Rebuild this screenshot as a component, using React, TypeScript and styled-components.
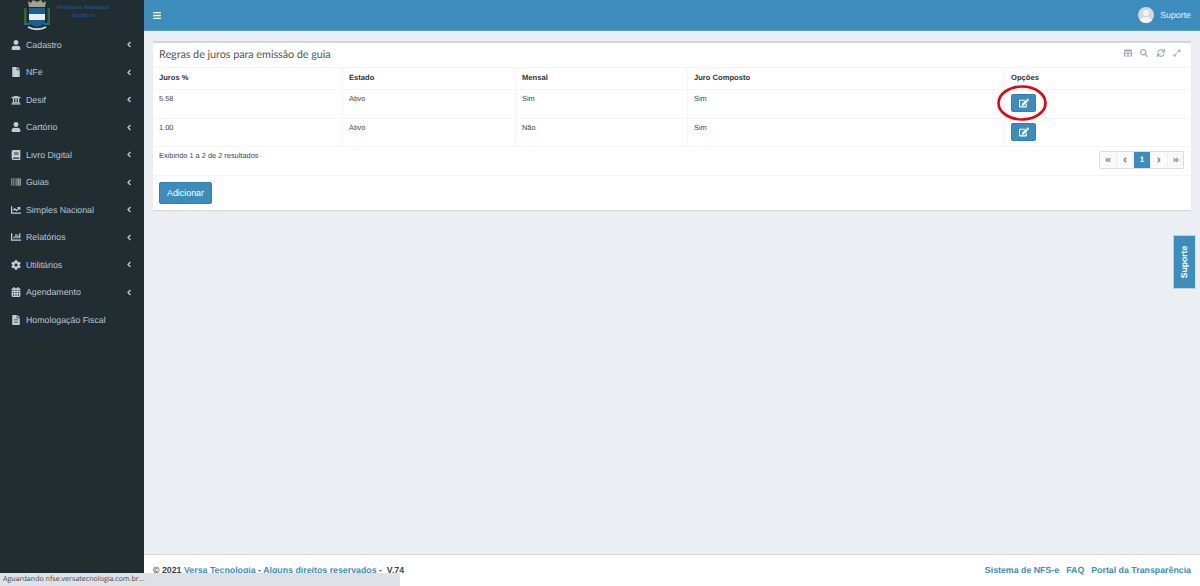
import React from 'react';
import styled, { createGlobalStyle } from 'styled-components';
import {
  FaUser, FaFile, FaUniversity, FaBook, FaChartLine, FaChartBar, FaCog, FaCalendarAlt, FaFileAlt,
  FaAngleLeft, FaAngleRight, FaAngleDoubleLeft, FaAngleDoubleRight, FaBars, FaTable, FaSearch, FaSync, FaExpandAlt, FaEdit, FaBarcode,
} from 'react-icons/fa';

const Global = createGlobalStyle`
  html, body { margin: 0; padding: 0; height: 100%; }
  body { font-family: "Liberation Sans", Arial, sans-serif; background: #ebeef3; overflow: hidden; text-rendering: geometricPrecision; }
  #root { height: 586px; }
  * { box-sizing: border-box; }
`;

const Page = styled.div`
  display: flex; width: 1200px; height: 586px; position: relative; overflow: hidden;
`;
const Sidebar = styled.aside`
  width: 144px; flex: none; background: #222d32; display: flex; flex-direction: column;
`;
const Logo = styled.div`
  height: 31px; display: flex; align-items: flex-start; padding-left: 24px; gap: 6px; overflow: hidden;
`;
const LogoText = styled.div`
  display: flex; flex-direction: column; align-items: center; width: 54px; padding-top: 5px;
  font-family: "Liberation Serif", serif; font-weight: 700; white-space: nowrap;
`;
const LogoLine = styled.span<{ $size: number; $mt?: number; $color?: string }>`
  font-size: ${p => p.$size}px; line-height: ${p => p.$size + 1}px; margin-top: ${p => p.$mt ?? 0}px; color: ${p => p.$color ?? '#17568a'};
`;
const Nav = styled.nav`
  display: flex; flex-direction: column;
`;
const NavItem = styled.a`
  height: 27.5px; display: flex; align-items: center; padding: 0 12px 0 11px;
  font-size: 8.8px; color: #b8c7ce;
  svg.lead { width: 10px; height: 10px; margin-right: 5px; flex: none; color: #c2ced4; }
  span { flex: 1; white-space: nowrap; }
  svg.arrow { width: 6px; height: 9px; color: #b8c7ce; flex: none; }
`;
const Main = styled.div`
  flex: 1; min-width: 0; display: flex; flex-direction: column; height: 586px;
`;
const Topbar = styled.header`
  height: 31px; flex: none; background: #3c8dbc; display: flex; align-items: center; justify-content: space-between;
  padding: 0 9px 0 9px; color: #fff; border-bottom: 1px solid #5a9fc9;
`;
const MenuIcon = styled.span`
  display: flex; color: #fff; svg { width: 8px; height: 9px; }
`;
const UserBox = styled.div`
  display: flex; align-items: center; gap: 6px; font-size: 8.8px; color: #e8f1f7;
`;
const Avatar = styled.span`
  width: 16px; height: 16px; border-radius: 50%; background: #d8d8d8; overflow: hidden; display: block;
  svg { display: block; width: 16px; height: 16px; }
`;
const Content = styled.main`
  flex: 1; padding: 10px 9px 0 9px; min-height: 0;
`;
const Box = styled.section`
  background: #fff; border-top: 2px solid #d2d6de; box-shadow: 0 1px 1px rgba(0,0,0,.1); height: 169px; display: flex; flex-direction: column; border-radius: 1px;
`;
const BoxHeader = styled.div`
  height: 24px; display: flex; align-items: center; justify-content: space-between; padding: 0 10px 0 6px; flex: none;
`;
const BoxTitle = styled.h3`
  margin: -2px 0 0; font-family: Lato, "Open Sans", sans-serif; font-weight: 400; font-size: 10.9px; letter-spacing: -0.08px; color: #555;
`;
const Tools = styled.div`
  display: flex; gap: 8.5px; margin-top: -4px; color: #a3abbb; svg { width: 8px; height: 8px; display: block; }
`;
const Table = styled.div`
  display: grid; grid-template-columns: 190px 173px 172px 317px 1fr; font-size: 7.4px; color: #444;
`;
const Cell = styled.div<{ $head?: boolean; $last?: boolean }>`
  height: ${p => (p.$head ? 22 : 28.5)}px; padding: ${p => (p.$head ? 5 : 4)}px 6px 0 6px; line-height: 10px;
  border-top: 1px solid #f4f4f4; border-right: ${p => (p.$last ? 0 : 1)}px solid #f4f4f4;
  font-weight: ${p => (p.$head ? 700 : 400)}; font-size: ${p => (p.$head ? 7.6 : 7.4)}px; color: ${p => (p.$head ? '#333' : '#444')};
`;
const Edit = styled.button`
  width: 25px; height: 18px; border: 1px solid #367fa9; border-radius: 2px; background: #3c8dbc; color: #fff; padding: 0;
  display: flex; align-items: center; justify-content: center; svg { width: 10px; height: 10px; }
`;
const Footline = styled.div`
  flex: 1; display: flex; justify-content: space-between; padding: 4px 7px 0 6px; border-top: 1px solid #f4f4f4;
  font-size: 7.4px; color: #444; line-height: 10px;
`;
const Pager = styled.div`
  display: flex; height: 18px; border: 1px solid #ddd; border-radius: 2px; align-self: flex-start;
`;
const Page1 = styled.span<{ $active?: boolean }>`
  width: 17px; display: flex; align-items: center; justify-content: center; font-weight: 700; font-size: 8px;
  background: ${p => (p.$active ? '#3c8dbc' : '#fafafa')}; color: ${p => (p.$active ? '#fff' : '#777')};
  border-left: 1px solid #eee; &:first-child { border-left: 0; width: 16px; }
  &:last-child { width: 16px; }
  svg { width: 6px; height: 8px; }
`;
const BoxFooter = styled.div`
  height: 35px; flex: none; border-top: 1px solid #f4f4f4; padding: 6px 6px 0 6px;
`;
const AddButton = styled.button`
  display: block; width: 53px; height: 21.5px; background: #3c8dbc; border: 1px solid #367fa9; border-radius: 2px; color: #fff; padding: 0;
  font-family: "Liberation Sans", Arial, sans-serif; font-size: 8.9px;
`;
const Footer = styled.footer`
  height: 32px; flex: none; background: #fff; border-top: 1px solid #d2d6de; display: flex; justify-content: space-between;
  padding: 9px 9px 0 9px; font-size: 8.8px; font-weight: 700; color: #444; line-height: 12px;
`;
const Link = styled.a<{ $ml?: number }>`
  color: #3c8dbc; margin-left: ${p => p.$ml ?? 0}px;
`;
const SupportTab = styled.div`
  position: absolute; right: 4px; top: 235px; width: 23px; height: 54px; background: #3c8dbc; border: 1px solid #c9ced6; border-right-color: #dfe3e9;
  color: #fff; font-size: 8.6px; font-weight: 700;
  display: flex; align-items: center; justify-content: center;
  span { transform: rotate(-90deg); white-space: nowrap; display: block; }
`;
const StatusBar = styled.div`
  position: absolute; left: 0; bottom: 0; width: 400px; height: 13px; background: #dee1e6; color: #444;
  font-family: "Open Sans", sans-serif; font-size: 7.1px; line-height: 13px; padding-left: 3px; white-space: nowrap;
`;
const Marker = styled.svg`
  position: absolute; left: 997px; top: 85px; width: 50px; height: 36px; pointer-events: none;
`;

const items: [string, React.ComponentType<{ className?: string }>, boolean][] = [
  ['Cadastro', FaUser, true], ['NFe', FaFile, true], ['Desif', FaUniversity, true], ['Cartório', FaUser, true],
  ['Livro Digital', FaBook, true], ['Guias', FaBarcode, true], ['Simples Nacional', FaChartLine, true],
  ['Relatórios', FaChartBar, true], ['Utilitários', FaCog, true], ['Agendamento', FaCalendarAlt, true], ['Homologação Fiscal', FaFileAlt, false],
];

const rows = [['5.58', 'Ativo', 'Sim', 'Sim'], ['1.00', 'Ativo', 'Não', 'Sim']];

export default function App() {
  return (
    <Page>
      <Global />
      <Sidebar>
        <Logo>
          <svg width="26" height="31" viewBox="0 0 26 31" aria-hidden="true">
            <path d="M4 1l3 2 2-3 4 2 4-2 2 3 3-2-1 6H5z" fill="#a5a18f" />
            <rect x="0" y="8" width="2.5" height="15" fill="#2d6a36" />
            <rect x="23.5" y="8" width="2.5" height="15" fill="#2d6a36" />
            <path d="M5 8h16v13c0 3-4 5-8 6-4-1-8-3-8-6z" fill="#1e5d92" />
            <rect x="5" y="14" width="16" height="6" fill="#e6eef4" />
            <path d="M0 24h6M20 24h6" stroke="#1e6a9a" strokeWidth="2" />
            <path d="M4 27c5 3 13 3 18 0" stroke="#cfd6da" strokeWidth="2" fill="none" />
          </svg>
          <LogoText>
            <LogoLine $size={5.8}>Prefeitura Municipal</LogoLine>
            <LogoLine $size={5} $mt={2}>MODELO</LogoLine>
            <LogoLine $size={2.4} $mt={4} $color="#1f6a8f">. . . . . . . . . . . . . . . . . . . . . . . . . . .</LogoLine>
          </LogoText>
        </Logo>
        <Nav>
          {items.map(([label, Icon, arrow]) => (
            <NavItem key={label}>
              <Icon className="lead" />
              <span>{label}</span>
              {arrow && <FaAngleLeft className="arrow" />}
            </NavItem>
          ))}
        </Nav>
      </Sidebar>
      <Main>
        <Topbar>
          <MenuIcon><FaBars /></MenuIcon>
          <UserBox>
            <Avatar>
              <svg viewBox="0 0 16 16"><circle cx="8" cy="6" r="3" fill="#f4f4f4" /><ellipse cx="8" cy="14" rx="6" ry="4" fill="#f4f4f4" /></svg>
            </Avatar>
            Suporte
          </UserBox>
        </Topbar>
        <Content>
          <Box>
            <BoxHeader>
              <BoxTitle>Regras de juros para emissão de guia</BoxTitle>
              <Tools><FaTable /><FaSearch /><FaSync /><FaExpandAlt /></Tools>
            </BoxHeader>
            <Table>
              {['Juros %', 'Estado', 'Mensal', 'Juro Composto', 'Opções'].map((h, i) => (
                <Cell key={h} $head $last={i === 4}>{h}</Cell>
              ))}
              {rows.map(r => (
                <React.Fragment key={r[0]}>
                  {r.map((c, i) => <Cell key={i}>{c}</Cell>)}
                  <Cell $last><Edit><FaEdit /></Edit></Cell>
                </React.Fragment>
              ))}
            </Table>
            <Footline>
              <span>Exibindo 1 a 2 de 2 resultados</span>
              <Pager>
                <Page1><FaAngleDoubleLeft /></Page1>
                <Page1><FaAngleLeft /></Page1>
                <Page1 $active>1</Page1>
                <Page1><FaAngleRight /></Page1>
                <Page1><FaAngleDoubleRight /></Page1>
              </Pager>
            </Footline>
            <BoxFooter><AddButton>Adicionar</AddButton></BoxFooter>
          </Box>
        </Content>
        <Footer>
          <span>© 2021 <Link>Versa Tecnologia</Link> - <Link>Alguns direitos reservados</Link> -&nbsp; V.74</span>
          <span><Link>Sistema de NFS-e</Link><Link $ml={7}>FAQ</Link><Link $ml={7}>Portal da Transparência</Link></span>
        </Footer>
      </Main>
      <SupportTab><span>Suporte</span></SupportTab>
      <Marker viewBox="0 0 50 36"><ellipse cx="25" cy="18" rx="23.5" ry="16.5" fill="none" stroke="#e8000b" strokeWidth="2.6" /></Marker>
      <StatusBar>Aguardando nfse.versatecnologia.com.br...</StatusBar>
    </Page>
  );
}
